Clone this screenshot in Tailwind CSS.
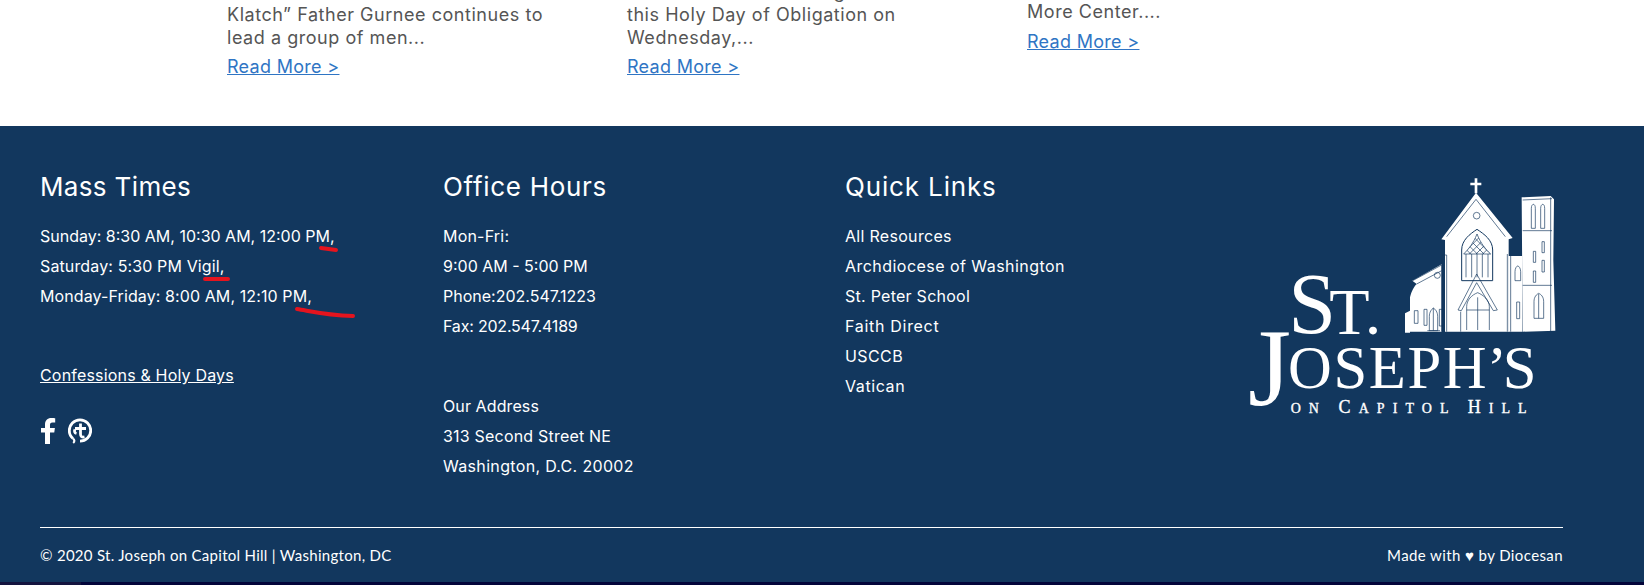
<!DOCTYPE html>
<html lang="en">
<head>
  <meta charset="UTF-8">
  <meta name="viewport" content="width=device-width, initial-scale=1.0">
  <title>St. Joseph's on Capitol Hill</title>
  <script src="https://cdn.jsdelivr.net/npm/@tailwindcss/browser@4"></script>
</head>
<body class="bg-white font-['Inter',sans-serif] overflow-hidden">
  <!-- news teasers, cut off by the top of the window -->
  <section class="h-[126px] overflow-hidden pl-[227px] grid grid-cols-[400px_400px_400px] text-[18px] leading-[23px] tracking-[0.54px] text-[#555555]">
    <div class="mt-[3px]">
      <p>Klatch” Father Gurnee continues to<br>lead a group of men...</p>
      <a href="#" class="block mt-[6px] text-[#2f75c4] underline tracking-[0.3px]">Read More &gt;</a>
    </div>
    <div class="-mt-[20px]">
      <p>Mass will be celebrating<br>this Holy Day of Obligation on<br>Wednesday,...</p>
      <a href="#" class="block mt-[6px] text-[#2f75c4] underline tracking-[0.3px]">Read More &gt;</a>
    </div>
    <div>
      <p>More Center....</p>
      <a href="#" class="block mt-[7px] text-[#2f75c4] underline tracking-[0.3px]">Read More &gt;</a>
    </div>
  </section>

  <footer class="relative h-[456px] bg-[#12375e] text-white">
    <div class="grid grid-cols-[403px_402px_375px_1fr] pl-[40px] pt-[42px] h-[401px] text-[16px] leading-[30px]">
      <div>
        <h3 class="text-[26px] leading-[38px] mb-[15px] tracking-[0.35px]">Mass Times</h3>
        <p>Sunday: 8:30 AM, 10:30 AM, 12:00 PM,</p>
        <p class="tracking-[0.13px]">Saturday: 5:30 PM Vigil,</p>
        <p class="tracking-[0.1px]">Monday-Friday: 8:00 AM, 12:10 PM,</p>
        <a href="#" class="block mt-[49px] underline tracking-[0.18px]">Confessions &amp; Holy Days</a>
        <div class="flex items-center gap-[12px] mt-[28px] pl-[1px]">
          <svg width="15" height="26" viewBox="0 0 15 26" fill="#fff"><path d="M4 26V14.5H0V10h4V6.6C4 2.4 6.5 0 10.300 0c1.800 0 3.400.14 3.900.2v4.200h-2.700c-2.100 0-2.500 1-2.500 2.500V10h4.900l-.64 4.500H9V26z"/></svg>
          <svg width="24" height="26" viewBox="0 0 24 26" fill="none" stroke="#fff"><path d="M5 20.500C2.500 18.500 1.300 15.800 1.300 12.500 1.300 6.500 6 1.800 12 1.800s10.700 4.700 10.700 10.700S18 23.200 12 23.200" stroke-width="2.800"/><path d="M5 20.500c1.500 1.200 2 3.100.2 4.500" stroke-width="2.200"/><path d="M12.500 5.500v10.500c0 2.500 1.300 3.500 4 2.900M7 10.500h11M8.500 15.500C6.500 15 6 13 7 11.500" stroke-width="2.800"/></svg>
        </div>
      </div>
      <div>
        <h3 class="text-[26px] leading-[38px] mb-[15px] tracking-[0.7px]">Office Hours</h3>
        <p class="tracking-[0.2px]">Mon-Fri:</p>
        <p>9:00 AM - 5:00 PM</p>
        <p>Phone:202.547.1223</p>
        <p class="tracking-[-0.2px]">Fax: 202.547.4189</p>
        <p class="mt-[50px] tracking-[0.1px]">Our Address</p>
        <p class="tracking-[0.2px]">313 Second Street NE</p>
        <p class="tracking-[0.33px]">Washington, D.C. 20002</p>
      </div>
      <div>
        <h3 class="text-[26px] leading-[38px] mb-[15px] tracking-[0.85px]">Quick Links</h3>
        <p class="tracking-[0.3px]">All Resources</p>
        <p class="tracking-[0.46px]">Archdiocese of Washington</p>
        <p class="tracking-[0.26px]">St. Peter School</p>
        <p class="tracking-[0.7px]">Faith Direct</p>
        <p class="tracking-[0.4px]">USCCB</p>
        <p class="tracking-[0.6px]">Vatican</p>
      </div>
      <div class="-mt-[8px]">
        <!-- logo: church drawing plus real serif text -->
        <svg width="360" height="270" viewBox="0 0 1080 810">
          <defs>
            <clipPath id="arch"><path d="M731 282C745 268 760 250 771 222 782 250 797 268 812 282z"/></clipPath>
          </defs>
          <g fill="#fff">
            <path d="M764 55h8v13h12v8h-12v24h-8V76h-13v-8h13z"/>
            <path d="M768 98 878 234 866 238V515H675V240L664 238z"/>
            <path d="M865 288h42v227h-42z"/>
            <path d="M905 112 992 108 1002 118 1000 300 1006 512 908 515z"/>
            <path d="M577 362 665 313V515H570V412C575 392 582 380 590 372z"/>
            <path d="M555 518V460L570 452V518z"/>
          </g>
          <g fill="none" stroke="#12375e" stroke-width="2">
            <path d="M768 118 680 230M768 118 856 230"/>
            <circle cx="770" cy="167" r="10"/>
            <path d="M725 362V270C725 240 750 222 771 208 792 222 818 240 818 270V362z" stroke-width="3"/>
            <path d="M738 352V282M755 352V282M771 352V282M787 352V282M804 352V282M731 282C745 268 760 250 771 222 782 250 797 268 812 282z"/>
            <path clip-path="url(#arch)" d="M720 270 770 220M720 290 790 220M740 290 810 220M760 290 820 230M780 290 830 240M820 270 770 220M820 290 750 220M800 290 730 220M780 290 720 230M760 290 710 240"/>
            <path d="M680 285V515M667 295V515M680 285H668M862 282V515M872 285V515"/>
            <path d="M770 342 714 450 724 452 770 368 820 452 832 450z"/>
            <path d="M722 455V515M740 510V440C740 420 755 405 773 398 790 405 808 420 808 440V510M773 412V510M740 450H808"/>
            <path d="M578 362 665 315M590 372 665 332M665 315V515"/>
            <circle cx="652" cy="346" r="9"/>
            <path d="M583 452h11v38h-11zM612 448h9v48h-9zM658 448h9v50h-9zM628 512V470C628 455 635 448 640 444 646 448 653 455 653 470V512zM640 444V512M622 512H660"/>
            <path d="M885 362V335C885 325 890 318 893 318 897 318 902 325 902 335V362zM890 426h9v50h-9z"/>
            <path d="M908 120 996 116M992 112V515M908 212H996M908 376H996"/>
            <path d="M934 205V145C934 136 938 133 940 133 943 133 946 136 946 145V205zM962 205V145C962 136 966 133 968 133 971 133 974 136 974 145V205z"/>
            <path d="M966 245h7v33h-7zM940 274h7v33h-7zM966 301h7v35h-7zM940 333h7v34h-7z"/>
            <path d="M942 475V425C942 410 950 403 956 400 963 403 971 410 971 425V475zM956 402V475"/>
          </g>
          <g fill="#fff" font-family="'Liberation Serif',serif" stroke="none">
            <text x="205" y="520" font-size="258">S</text>
            <text x="328" y="522" font-size="198">T.</text>
            <text x="84" y="735" font-size="332">J</text>
            <text x="204" y="684" font-size="182" textLength="596" lengthAdjust="spacing">OSEPH</text>
            <text x="800" y="684" font-size="182">’<tspan dx="-12">S</tspan></text>
            <text x="212" y="758" font-size="42" textLength="708" lengthAdjust="spacing" stroke="#fff" stroke-width="1">ON <tspan font-size="54">C</tspan>APITOL <tspan font-size="54">H</tspan>ILL</text>
          </g>
        </svg>
      </div>
    </div>
    <div class="ml-[40px] w-[1523px] h-px bg-white"></div>
    <div class="flex justify-between w-[1563px] pl-[40px] pt-[14px] text-[15px] leading-[26px] font-['Lato',sans-serif]">
      <span class="tracking-[0.29px]">© 2020 St. Joseph on Capitol Hill | Washington, DC</span>
      <span class="tracking-[0.4px]">Made with ♥ by Diocesan</span>
    </div>

    <!-- red marker scribbles drawn over the mass times -->
    <svg class="absolute left-0 top-0 pointer-events-none" width="400" height="200" viewBox="0 126 400 200" fill="none" stroke="#e5141e" stroke-width="4" stroke-linecap="round">
      <path d="M321 248 336 250"/>
      <path d="M205 279H228"/>
      <path d="M297 309C310 311 325 315 353 316"/>
    </svg>
  </footer>
  <div class="flex h-[3px] bg-[#03053a]"><div class="w-[81px] bg-[#14143f]"></div></div>
</body>
</html>
